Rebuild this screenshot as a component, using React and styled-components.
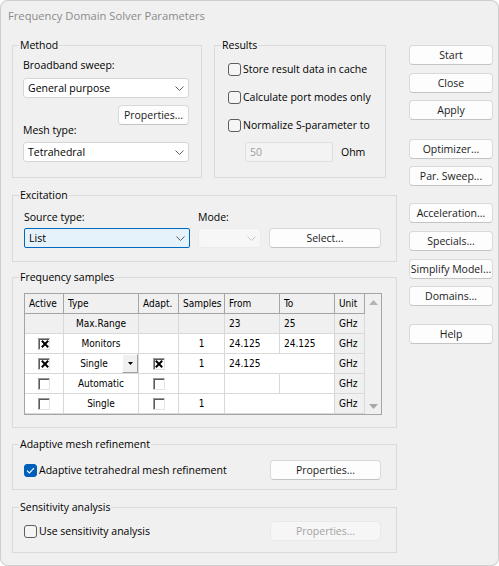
import React from "react";
import styled, { createGlobalStyle } from "styled-components";

const Global = createGlobalStyle`
  html, body { margin: 0; padding: 0; background: #ffffff; }
  body {
    font-family: "Segoe UI", "Open Sans", Roboto, "Liberation Sans", sans-serif;
    font-size: 10.5px;
    color: #000;
  }
  * { box-sizing: border-box; }
`;

const Window = styled.div`
  width: 499px;
  height: 566px;
  background: #f0f0f0;
  border-radius: 8px;
  box-shadow: inset 0 0 0 1px #cfcfcf;
  overflow: hidden;
  display: flex;
  flex-direction: column;
`;

const TitleBar = styled.div`
  height: 30px;
  display: flex;
  align-items: center;
  padding-left: 8px;
  font-size: 11.2px;
  color: #8a8a8a;
`;

const Main = styled.div`
  display: flex;
  gap: 12px;
  padding: 7px 0 0 12px;
`;

const LeftCol = styled.div`
  width: 385px;
  display: flex;
  flex-direction: column;
`;

const TopRow = styled.div`
  display: flex;
  gap: 12px;
  align-items: stretch;
`;

const Group = styled.fieldset`
  margin: ${(p) => p.$mt || 0}px 0 0 0;
  padding: 0 0 ${(p) => p.$pb || 0}px 0;
  border: 1px solid #dadada;
  min-width: 0;
  width: ${(p) => (p.$w ? `${p.$w}px` : "auto")};
`;

const Legend = styled.legend`
  margin-left: 6px;
  padding: 0 1px;
  line-height: 16px;
`;

const Stack = styled.div`
  display: flex;
  flex-direction: column;
  padding: ${(p) => p.$pad};
`;

const FieldLabel = styled.div`
  line-height: ${(p) => p.$lh || 16}px;
  margin-top: ${(p) => p.$mt || 0}px;
  white-space: nowrap;
`;

const ComboBox = styled.div`
  height: 20px;
  margin-top: ${(p) => p.$mt || 0}px;
  display: flex;
  align-items: center;
  justify-content: space-between;
  padding: 0 4px 0 4px;
  border-radius: ${(p) => (p.$active ? 2 : 3)}px;
  background: ${(p) => (p.$active ? "#e5f1fb" : p.$disabled ? "#f7f7f7" : "#ffffff")};
  border: 1px solid
    ${(p) => (p.$active ? "#0067c0" : p.$disabled ? "#ebebeb" : "#d6d6d6")};
  color: #000;
`;

const Btn = styled.button`
  height: 20px;
  width: ${(p) => (p.$w ? `${p.$w}px` : "100%")};
  margin-top: ${(p) => p.$mt || 0}px;
  align-self: ${(p) => p.$self || "auto"};
  padding: 0;
  font: inherit;
  white-space: nowrap;
  color: #1b1b1b;
  background: #fdfdfd;
  border: 1px solid #d9d9d9;
  border-bottom-color: #c4c4c4;
  border-radius: 4px;
  &:disabled {
    color: #a3a3a3;
    background: #f6f6f6;
    border-color: #e9e9e9;
  }
`;

const CheckRow = styled.label`
  height: 20px;
  margin-top: ${(p) => p.$mt || 0}px;
  display: flex;
  align-items: center;
  gap: 2px;
  white-space: nowrap;
`;

const WinCheck = styled.span`
  width: 13px;
  height: 13px;
  flex: none;
  border-radius: 3px;
  display: flex;
  align-items: center;
  justify-content: center;
  background: ${(p) => (p.$on ? "#005fb8" : "#f5f5f5")};
  border: 1px solid ${(p) => (p.$on ? "#005fb8" : "#5e5e5e")};
`;

const InputRow = styled.div`
  display: flex;
  align-items: center;
  margin: 7px 0 0 17px;
  gap: 8px;
`;

const DisabledInput = styled.div`
  width: 88px;
  height: 20px;
  padding-left: 4px;
  display: flex;
  align-items: center;
  color: #9e9e9e;
  background: #f3f3f3;
  border: 1px solid #dedede;
  border-radius: 2px;
`;

const ExGrid = styled.div`
  display: grid;
  grid-template-columns: 166px 63px 112px;
  column-gap: 8px;
  padding: 6px 0 0 11px;
`;

const ControlsCell = styled.div`
  margin-top: 3px;
`;

const TableWrap = styled.div`
  margin: 8px 0 0 11px;
  width: 358px;
  display: grid;
  grid-template-columns: 39px 75px 40px 46px 55px 55px 30px 16px;
  grid-auto-rows: 20px;
  border: 1px solid #a5a5a5;
  background: #ffffff;
  font-family: "DejaVu Sans Condensed", "Liberation Sans", sans-serif;
  font-size: 10px;
  color: #000;
`;

const HeadCell = styled.div`
  background: #f0f0f0;
  border-right: 1px solid #a5a5a5;
  border-bottom: 1px solid #a5a5a5;
  padding-left: 4px;
  display: flex;
  align-items: center;
  white-space: nowrap;
  overflow: hidden;
`;

const Cell = styled.div`
  grid-column: ${(p) => (p.$span ? `span ${p.$span}` : "auto")};
  background: ${(p) => (p.$gray ? "#f0f0f0" : "#ffffff")};
  border-right: 1px solid #d9d9d9;
  border-bottom: 1px solid #d9d9d9;
  display: flex;
  align-items: center;
  justify-content: ${(p) => p.$align || "flex-start"};
  padding-left: ${(p) => (p.$align ? 0 : 4)}px;
  white-space: nowrap;
`;

const TypeText = styled.span`
  flex: 1;
  text-align: center;
  padding-left: 2px;
`;

const DropBtn = styled.span`
  width: 16px;
  height: 19px;
  flex: none;
  display: flex;
  align-items: center;
  justify-content: center;
  background: #f0f0f0;
  border: 1px solid;
  border-color: #ffffff #a0a0a0 #a0a0a0 #ffffff;
`;

const ScrollBar = styled.div`
  grid-column: 8;
  grid-row: 1 / span 6;
  background: #f0f0f0;
  display: flex;
  flex-direction: column;
  justify-content: space-between;
  align-items: center;
  padding: 6px 0 5px;
`;

const GridCheck = styled.span`
  width: 12px;
  height: 12px;
  background: #ffffff;
  border: 1px solid;
  border-color: #9a9a9a #e3e3e3 #e3e3e3 #9a9a9a;
  box-shadow: inset 1px 1px 0 #5a5a5a;
  display: flex;
  align-items: center;
  justify-content: center;
  padding: 1px 0 0 1px;
`;

const BottomRow = styled.div`
  display: flex;
  align-items: center;
  justify-content: space-between;
  padding: 0 15px 0 11px;
  margin-top: ${(p) => p.$mt || 0}px;
`;

const RightCol = styled.div`
  width: 84px;
  display: flex;
  flex-direction: column;
  padding-top: 8px;
`;

const Chevron = ({ color = "#5f5f5f" }) => (
  <svg width="9" height="5" viewBox="0 0 9 5">
    <path d="M0.5 0.5 L4.5 4.5 L8.5 0.5" fill="none" stroke={color} strokeWidth="1" />
  </svg>
);

const Combo = ({ children, ...rest }) => (
  <ComboBox {...rest}>
    <span>{children}</span>
    <Chevron color={rest.$disabled ? "#c6c6c6" : "#5f5f5f"} />
  </ComboBox>
);

const Check = ({ on, children, mt }) => (
  <CheckRow $mt={mt}>
    <WinCheck $on={on}>
      {on && (
        <svg width="9" height="7" viewBox="0 0 9 7">
          <path d="M1 3.6 L3.4 6 L8 1.2" fill="none" stroke="#fff" strokeWidth="1.2" />
        </svg>
      )}
    </WinCheck>
    <span>{children}</span>
  </CheckRow>
);

const GCheck = ({ on }) => (
  <GridCheck>
    {on && (
      <svg width="8" height="8" viewBox="0 0 8 8">
        <path d="M0.8 0.8 L7.2 7.2 M7.2 0.8 L0.8 7.2" stroke="#000" strokeWidth="2" />
      </svg>
    )}
  </GridCheck>
);

const Arrow = ({ up, color, w = 9, h = 5 }) => (
  <svg width={w} height={h} viewBox="0 0 9 5">
    <path d={up ? "M0 5 L4.5 0 L9 5 Z" : "M0 0 L4.5 5 L9 0 Z"} fill={color} />
  </svg>
);

const sideButtons = [
  ["Start", 0],
  ["Close", 8],
  ["Apply", 7],
  ["Optimizer...", 19],
  ["Par. Sweep...", 7],
  ["Acceleration...", 17],
  ["Specials...", 8],
  ["Simplify Model...", 8],
  ["Domains...", 7],
  ["Help", 18],
];

export default function App() {
  return (
    <>
      <Global />
      <Window>
        <TitleBar>Frequency Domain Solver Parameters</TitleBar>
        <Main>
          <LeftCol>
            <TopRow>
              <Group $w={190} $pb={15}>
                <Legend>Method</Legend>
                <Stack $pad="4px 12px 0 10px">
                  <FieldLabel>Broadband sweep:</FieldLabel>
                  <Combo $mt={5}>General purpose</Combo>
                  <Btn $w={71} $self="flex-end" $mt={7}>Properties...</Btn>
                  <FieldLabel $lh={12} $mt={-1}>Mesh type:</FieldLabel>
                  <Combo $mt={6}>Tetrahedral</Combo>
                </Stack>
              </Group>
              <Group $w={172} $pb={15}>
                <Legend>Results</Legend>
                <Stack $pad="6px 0 0 13px">
                  <Check>Store result data in cache</Check>
                  <Check mt={8}>Calculate port modes only</Check>
                  <Check mt={8}>Normalize S-parameter to</Check>
                  <InputRow>
                    <DisabledInput>50</DisabledInput>
                    <span>Ohm</span>
                  </InputRow>
                </Stack>
              </Group>
            </TopRow>

            <Group $mt={9} $pb={13}>
              <Legend>Excitation</Legend>
              <ExGrid>
                <FieldLabel>Source type:</FieldLabel>
                <FieldLabel>Mode:</FieldLabel>
                <span />
                <ControlsCell>
                  <Combo $active>List</Combo>
                </ControlsCell>
                <ControlsCell>
                  <Combo $disabled>{""}</Combo>
                </ControlsCell>
                <ControlsCell>
                  <Btn>Select...</Btn>
                </ControlsCell>
              </ExGrid>
            </Group>

            <Group $mt={7} $pb={12}>
              <Legend>Frequency samples</Legend>
              <TableWrap>
                <HeadCell>Active</HeadCell>
                <HeadCell>Type</HeadCell>
                <HeadCell>Adapt.</HeadCell>
                <HeadCell>Samples</HeadCell>
                <HeadCell>From</HeadCell>
                <HeadCell>To</HeadCell>
                <HeadCell>Unit</HeadCell>
                <ScrollBar>
                  <Arrow up color="#b4b4b4" />
                  <Arrow color="#a8a8a8" />
                </ScrollBar>

                <Cell $gray />
                <Cell $gray $align="center">Max.Range</Cell>
                <Cell $gray />
                <Cell $gray />
                <Cell $gray>23</Cell>
                <Cell $gray>25</Cell>
                <Cell $gray>GHz</Cell>

                <Cell $align="center"><GCheck on /></Cell>
                <Cell $align="center">Monitors</Cell>
                <Cell />
                <Cell $align="center">1</Cell>
                <Cell>24.125</Cell>
                <Cell>24.125</Cell>
                <Cell $gray>GHz</Cell>

                <Cell $align="center"><GCheck on /></Cell>
                <Cell $align="stretch">
                  <TypeText>Single</TypeText>
                  <DropBtn>
                    <Arrow color="#000" w={5} h={3} />
                  </DropBtn>
                </Cell>
                <Cell $align="center"><GCheck on /></Cell>
                <Cell $align="center">1</Cell>
                <Cell $span={2}>24.125</Cell>
                <Cell $gray>GHz</Cell>

                <Cell $align="center"><GCheck /></Cell>
                <Cell $align="center">Automatic</Cell>
                <Cell $align="center"><GCheck /></Cell>
                <Cell />
                <Cell />
                <Cell />
                <Cell $gray>GHz</Cell>

                <Cell $align="center"><GCheck /></Cell>
                <Cell $align="center">Single</Cell>
                <Cell $align="center"><GCheck /></Cell>
                <Cell $align="center">1</Cell>
                <Cell $span={2} />
                <Cell $gray>GHz</Cell>
              </TableWrap>
            </Group>

            <Group $mt={8} $pb={9}>
              <Legend>Adaptive mesh refinement</Legend>
              <BottomRow $mt={8}>
                <Check on>Adaptive tetrahedral mesh refinement</Check>
                <Btn $w={111}>Properties...</Btn>
              </BottomRow>
            </Group>

            <Group $mt={9} $pb={11}>
              <Legend>Sensitivity analysis</Legend>
              <BottomRow $mt={6}>
                <Check>Use sensitivity analysis</Check>
                <Btn $w={111} disabled>Properties...</Btn>
              </BottomRow>
            </Group>
          </LeftCol>

          <RightCol>
            {sideButtons.map(([label, mt]) => (
              <Btn key={label} $mt={mt}>{label}</Btn>
            ))}
          </RightCol>
        </Main>
      </Window>
    </>
  );
}
